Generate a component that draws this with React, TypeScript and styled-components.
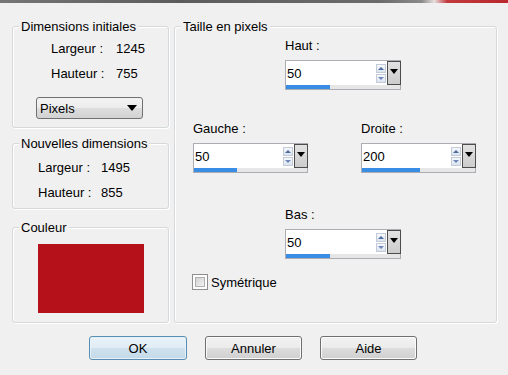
import styled, { createGlobalStyle } from 'styled-components';

const GlobalStyle = createGlobalStyle`
  html, body {
    margin: 0;
    padding: 0;
  }
  body {
    background: #f0f0f0;
    font-family: 'Liberation Sans', Arial, sans-serif;
    font-size: 13px;
    color: #000;
  }
`;

const Window = styled.div`
  width: 508px;
  height: 375px;
  background: #f0f0f0;
  display: flex;
  flex-direction: column;
  overflow: hidden;
`;

const TitleEdge = styled.div`
  height: 3px;
  background: linear-gradient(
    to right,
    #767676 0%,
    #5c5c5c 35%,
    #6c6c6c 75%,
    #8a8a8a 83%,
    #e8dede 85.5%,
    #c23a3e 88%,
    #b8282c 100%
  );
`;

const Content = styled.div`
  display: flex;
  gap: 5px;
  padding: 23px 11px 0 12px;
`;

const LeftColumn = styled.div`
  width: 157px;
  display: flex;
  flex-direction: column;
`;

const GroupBox = styled.div<{ $height: number; $top?: number; $width?: number }>`
  position: relative;
  box-sizing: border-box;
  height: ${(p) => p.$height}px;
  width: ${(p) => (p.$width ? `${p.$width}px` : 'auto')};
  margin-top: ${(p) => p.$top ?? 0}px;
  border: 1px solid #d5d9dc;
  border-radius: 3px;
  box-shadow: inset 1px 1px 0 #fff, 1px 1px 0 #fff;
`;

const Legend = styled.span`
  position: absolute;
  top: -8px;
  left: 6px;
  padding: 0 2px;
  line-height: 15px;
  background: #f0f0f0;
  white-space: nowrap;
`;

const InfoGrid = styled.div<{ $left: number; $top: number; $col: number }>`
  display: grid;
  grid-template-columns: ${(p) => p.$col}px auto;
  row-gap: 10px;
  line-height: 15px;
  padding: ${(p) => p.$top}px 0 0 ${(p) => p.$left}px;
`;

const UnitSelect = styled.div`
  box-sizing: border-box;
  width: 107px;
  height: 22px;
  margin: 16px 0 0 23px;
  padding: 0 5px 0 3px;
  display: flex;
  align-items: center;
  justify-content: space-between;
  border: 1px solid #707070;
  border-radius: 3px;
  background: linear-gradient(#f3f3f3 0%, #ececec 50%, #dedede 50%, #d2d2d2 100%);
`;

const DownArrow = styled.span<{ $size: number }>`
  width: 0;
  height: 0;
  border-left: ${(p) => p.$size}px solid transparent;
  border-right: ${(p) => p.$size}px solid transparent;
  border-top: ${(p) => p.$size + 1}px solid #000;
`;

const Swatch = styled.div`
  width: 106px;
  height: 69px;
  margin: 16px 0 0 25px;
  background: #b5111b;
`;

const FieldBlock = styled.div<{ $left: number; $top: number }>`
  margin: ${(p) => p.$top}px 0 0 ${(p) => p.$left}px;
  display: flex;
  flex-direction: column;
  align-items: flex-start;
`;

const FieldLabel = styled.div`
  line-height: 15px;
  margin-bottom: 7px;
`;

const SideRow = styled.div`
  display: flex;
  gap: 53px;
  margin: 31px 0 0 18px;
`;

const Field = styled.div<{ $width: number }>`
  box-sizing: border-box;
  width: ${(p) => p.$width}px;
  height: 30px;
  border: 1px solid #abadb3;
  background: #fff;
  display: flex;
  flex-direction: column;
`;

const FieldTop = styled.div`
  display: flex;
  height: 24px;
`;

const FieldValue = styled.div`
  flex: 1;
  padding-left: 1px;
  line-height: 25px;
`;

const Spinner = styled.div`
  width: 10px;
  display: flex;
  flex-direction: column;
  gap: 1px;
  padding: 3px 1px 0 0;
`;

const SpinButton = styled.div<{ $up?: boolean }>`
  box-sizing: border-box;
  height: 9px;
  border: 1px solid #c3cbd8;
  background: linear-gradient(#f6f8fb, #dde4ee);
  display: flex;
  align-items: center;
  justify-content: center;

  &::after {
    content: '';
    border-left: 3px solid transparent;
    border-right: 3px solid transparent;
    ${(p) =>
      p.$up
        ? 'border-bottom: 3px solid #4d6aa3;'
        : 'border-top: 3px solid #6f86bb;'}
  }
`;

const DropButton = styled.div`
  box-sizing: border-box;
  width: 14px;
  margin-right: -1px;
  border: 1px solid #4c4c4c;
  background: linear-gradient(#e2e2e2, #cccccc);
  display: flex;
  justify-content: center;
  padding-top: 7px;
`;

const Progress = styled.div`
  height: 4px;
  background: #e6e6e6;
`;

const ProgressFill = styled.div`
  height: 100%;
  background: #3a8de4;
`;

const CheckRow = styled.label`
  display: flex;
  align-items: center;
  gap: 3px;
  margin: 15px 0 0 17px;
  line-height: 15px;
`;

const CheckBox = styled.span`
  box-sizing: border-box;
  width: 16px;
  height: 16px;
  border: 1px solid #8f8f8f;
  background: #fff;
  padding: 2px;

  &::before {
    content: '';
    display: block;
    width: 100%;
    height: 100%;
    border: 1px solid #b0b0b0;
    box-sizing: border-box;
    background: linear-gradient(135deg, #d3d3d3, #f2f2f2);
  }
`;

const ButtonRow = styled.div`
  display: flex;
  gap: 18px;
  margin: 13px 0 0 89px;
`;

const DialogButton = styled.button<{ $default?: boolean }>`
  box-sizing: border-box;
  width: ${(p) => (p.$default ? 98 : 97)}px;
  height: 24px;
  padding: 0;
  font: inherit;
  color: #000;
  border: 1px solid ${(p) => (p.$default ? '#5a8db3' : '#707070')};
  border-radius: 3px;
  box-shadow: inset 0 0 0 1px ${(p) => (p.$default ? '#e6f2fa' : '#fbfbfb')};
  background: ${(p) =>
    p.$default
      ? 'linear-gradient(#e9f2f8 0%, #e0ecf5 50%, #cfe1ee 50%, #c4d9e8 100%)'
      : 'linear-gradient(#f2f2f2 0%, #ebebeb 50%, #dddddd 50%, #cfcfcf 100%)'};
`;

type SpinProps = { label: string; value: number; width: number; fill: number };

const SpinField = ({ label, value, width, fill }: SpinProps) => (
  <>
    <FieldLabel>{label}</FieldLabel>
    <Field $width={width}>
      <FieldTop>
        <FieldValue>{value}</FieldValue>
        <Spinner>
          <SpinButton $up />
          <SpinButton />
        </Spinner>
        <DropButton>
          <DownArrow $size={4} />
        </DropButton>
      </FieldTop>
      <Progress>
        <ProgressFill style={{ width: `${fill}px` }} />
      </Progress>
    </Field>
  </>
);

const App = () => {
  return (
    <Window>
      <GlobalStyle />
      <TitleEdge />
      <Content>
        <LeftColumn>
          <GroupBox $height={102}>
            <Legend>Dimensions initiales</Legend>
            <InfoGrid $left={38} $top={14} $col={65}>
              <span>Largeur :</span>
              <span>1245</span>
              <span>Hauteur :</span>
              <span>755</span>
            </InfoGrid>
            <UnitSelect>
              <span>Pixels</span>
              <DownArrow $size={5} />
            </UnitSelect>
          </GroupBox>
          <GroupBox $height={66} $top={15}>
            <Legend>Nouvelles dimensions</Legend>
            <InfoGrid $left={25} $top={16} $col={63}>
              <span>Largeur :</span>
              <span>1495</span>
              <span>Hauteur :</span>
              <span>855</span>
            </InfoGrid>
          </GroupBox>
          <GroupBox $height={96} $top={18}>
            <Legend>Couleur</Legend>
            <Swatch />
          </GroupBox>
        </LeftColumn>
        <GroupBox $height={297} $width={323}>
          <Legend>Taille en pixels</Legend>
          <FieldBlock $left={110} $top={11}>
            <SpinField label="Haut :" value={50} width={116} fill={44} />
          </FieldBlock>
          <SideRow>
            <FieldBlock $left={0} $top={0}>
              <SpinField label="Gauche :" value={50} width={115} fill={43} />
            </FieldBlock>
            <FieldBlock $left={0} $top={0}>
              <SpinField label="Droite :" value={200} width={115} fill={58} />
            </FieldBlock>
          </SideRow>
          <FieldBlock $left={110} $top={34}>
            <SpinField label="Bas :" value={50} width={116} fill={44} />
          </FieldBlock>
          <CheckRow>
            <CheckBox />
            <span>Symétrique</span>
          </CheckRow>
        </GroupBox>
      </Content>
      <ButtonRow>
        <DialogButton $default>OK</DialogButton>
        <DialogButton>Annuler</DialogButton>
        <DialogButton>Aide</DialogButton>
      </ButtonRow>
    </Window>
  );
};

export default App;
